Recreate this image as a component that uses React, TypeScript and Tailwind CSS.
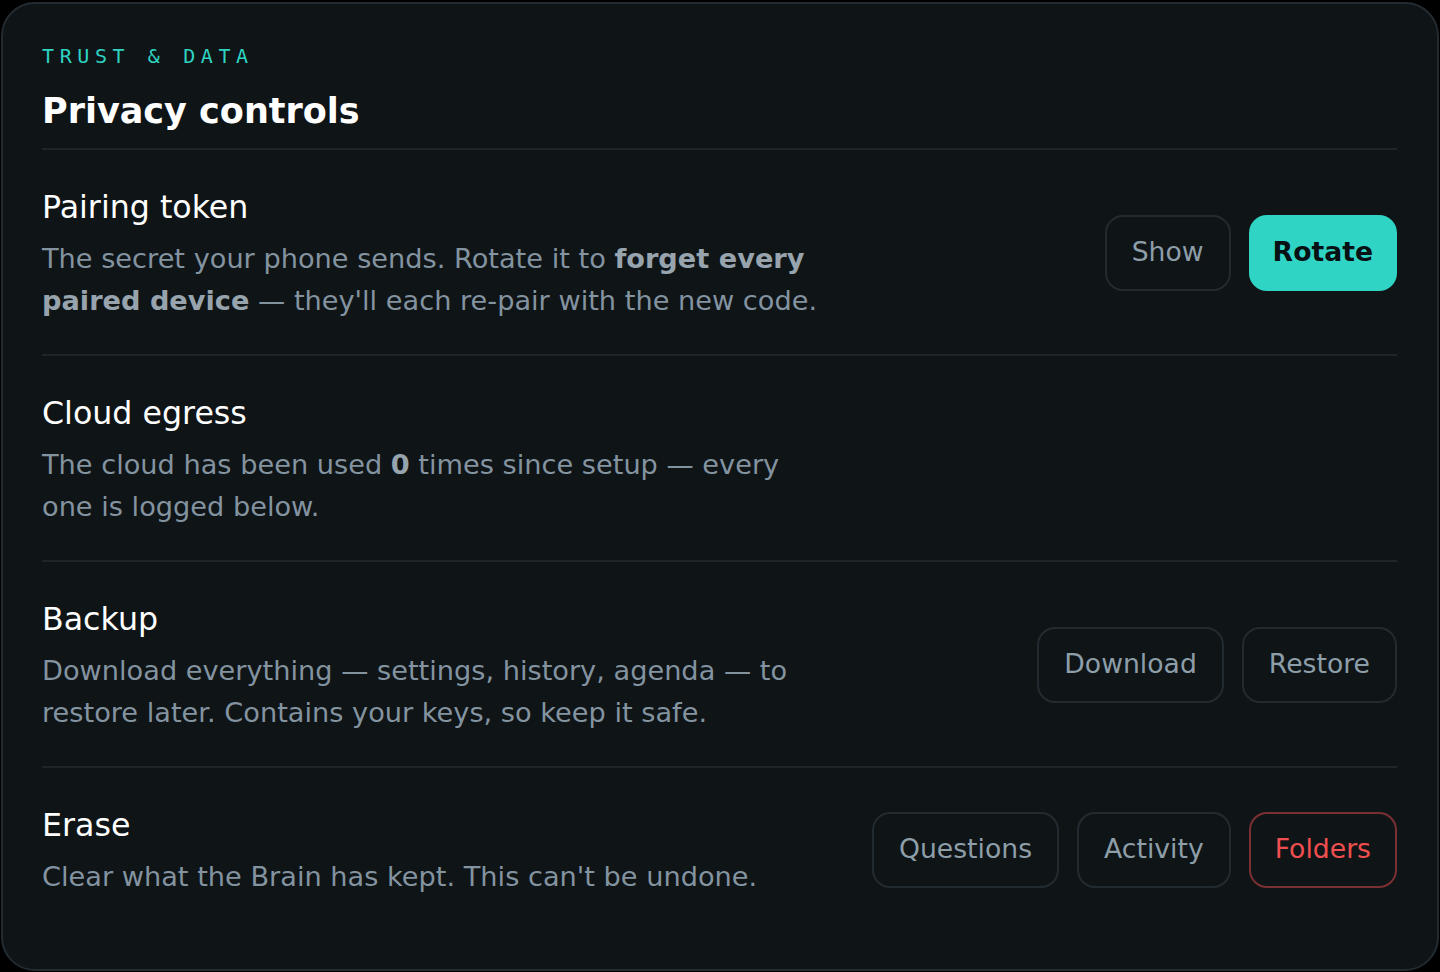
import { ReactNode } from "react";

type Tone = "ghost" | "primary" | "danger";

function ActionButton({ label, tone = "ghost" }: { label: string; tone?: Tone }) {
  const styles: Record<Tone, string> = {
    ghost: "px-[25px] border-2 border-[#222b30] text-[#8d9ea9]",
    primary: "px-6 bg-[#2fd4c4] text-[#071013] font-bold",
    danger: "px-6 border-2 border-[#7a3032] text-[#f04f4f]",
  };
  return (
    <button
      className={`h-[76px] rounded-[18px] text-[26.67px] leading-none whitespace-nowrap ${styles[tone]}`}
    >
      {label}
    </button>
  );
}

function Row({
  title,
  children,
  actions,
  last,
}: {
  title: string;
  children: ReactNode;
  actions?: ReactNode;
  last?: boolean;
}) {
  return (
    <div
      className={`flex items-center justify-between pt-[37px] pb-[32px] ${
        last ? "" : "border-b-2 border-[#1e262a]"
      }`}
    >
      <div className="max-w-[790px]">
        <div className="text-[31.67px] leading-[40px] text-white">{title}</div>
        <p className="mt-[11px] text-[27.2px] leading-[42px] text-[#8393a0]">{children}</p>
      </div>
      {actions && <div className="mb-[4px] flex items-center gap-[18px]">{actions}</div>}
    </div>
  );
}

export default function App() {
  return (
    <div className="min-h-screen bg-black pt-[2px] pl-[1px]" style={{ fontFamily: '"DejaVu Sans", sans-serif' }}>
      <div className="w-[1438px] rounded-[34px] border-2 border-[#222b30] bg-[#0f1417] pl-[39px] pr-[40px] pb-[39px]">
        {/* Header */}
        <div className="pt-[38px] pb-[16px] border-b-2 border-[#1e262a]">
          <div
            className="text-[20px] leading-[28px] tracking-[0.28em] text-[#2ed3c2]"
            style={{ fontFamily: '"DejaVu Sans Mono", monospace' }}
          >
            TRUST &amp; DATA
          </div>
          <h1 className="mt-[20px] text-[35px] leading-[42px] font-bold text-white">Privacy controls</h1>
        </div>

        <Row
          title="Pairing token"
          actions={
            <>
              <ActionButton label="Show" />
              <ActionButton label="Rotate" tone="primary" />
            </>
          }
        >
          The secret your phone sends. Rotate it to{" "}
          <b className="font-bold text-[#97a4ad]">forget every paired device</b> — they'll each re-pair with the
          new code.
        </Row>

        <Row title="Cloud egress">
          The cloud has been used <b className="font-bold text-[#97a4ad]">0</b> times since setup — every one is
          logged below.
        </Row>

        <Row
          title="Backup"
          actions={
            <>
              <ActionButton label="Download" />
              <ActionButton label="Restore" />
            </>
          }
        >
          Download everything — settings, history, agenda — to restore later. Contains your keys, so keep it safe.
        </Row>

        <Row
          title="Erase"
          last
          actions={
            <>
              <ActionButton label="Questions" />
              <ActionButton label="Activity" />
              <ActionButton label="Folders" tone="danger" />
            </>
          }
        >
          Clear what the Brain has kept. This can't be undone.
        </Row>
      </div>
    </div>
  );
}
